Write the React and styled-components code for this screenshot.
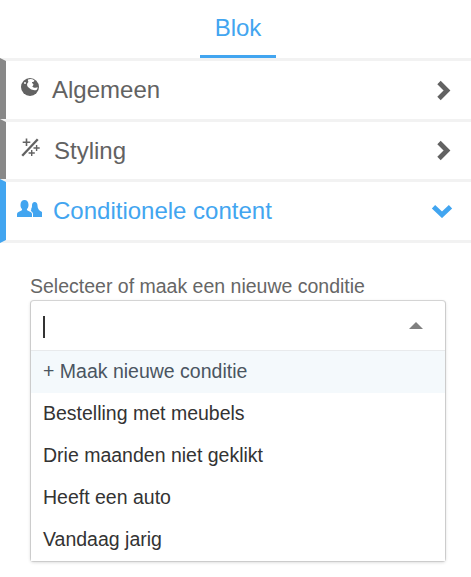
import React from "react";
import styled, { createGlobalStyle } from "styled-components";

const Global = createGlobalStyle`
  html, body { margin: 0; padding: 0; background: #fff; }
  body { font-family: "Liberation Sans", Arial, sans-serif; overflow: hidden; }
`;

const Page = styled.div`
  width: 471px;
  height: 577px;
  overflow: hidden;
`;

const TabBar = styled.div`
  display: flex;
  justify-content: center;
  height: 58px;
  padding-left: 5px;
`;

const Tab = styled.div`
  width: 76px;
  height: 55px;
  box-sizing: content-box;
  border-bottom: 3px solid #42a5f0;
  color: #42a5f0;
  font-size: 24px;
  line-height: 56px;
  text-align: center;
`;

const Accordion = styled.div`
  display: flex;
  flex-direction: column;
`;

const Row = styled.div`
  display: flex;
  align-items: center;
  box-sizing: border-box;
  height: ${(p) => p.$h}px;
  border-left: 6px solid ${(p) => (p.$active ? "#42a5f0" : "#888888")};
  border-top: 3px solid #f2f2f2;
  border-bottom: ${(p) => (p.$last ? "3px solid #f2f2f2" : "0")};
  color: ${(p) => (p.$active ? "#42a5f0" : "#626262")};
  font-size: 24px;
`;

const IconSlot = styled.span`
  display: flex;
  flex: none;
  width: ${(p) => p.$w}px;
  margin-left: ${(p) => p.$ml}px;
  transform: translateY(${(p) => p.$dy}px);
`;

const Title = styled.span`
  flex: 1;
  line-height: 28px;
`;

const ChevronSlot = styled.span`
  display: flex;
  margin-right: ${(p) => p.$mr}px;
`;

const Section = styled.div`
  padding: 30px 25px 0 30px;
`;

const Label = styled.div`
  color: #666666;
  font-size: 19.5px;
  line-height: 26px;
  margin-bottom: 1px;
`;

const Select = styled.div`
  border-radius: 4px;
  background: #fff;
  border: 1px solid #ccc;
  border-top-color: #d4d4d4;
  box-shadow: 0 1px 3px rgba(0, 0, 0, 0.12);
`;

const Control = styled.div`
  display: flex;
  align-items: center;
  height: 49px;
  padding: 0 22px 0 12px;
  border-bottom: 1px solid #e8eaec;
`;

const Caret = styled.span`
  width: 2px;
  height: 22px;
  margin-top: 2px;
  background: #333;
`;

const Arrow = styled.span`
  margin-left: auto;
  width: 0;
  height: 0;
  border-left: 7.500px solid transparent;
  border-right: 7.500px solid transparent;
  border-bottom: 7px solid #808080;
`;

const Option = styled.div`
  height: 42px;
  line-height: 40px;
  padding-left: 12px;
  font-size: 19.5px;
  color: ${(p) => (p.$focused ? "#4a5561" : "#333")};
  background: ${(p) => (p.$focused ? "#f4f9fc" : "#fff")};
`;

const Globe = () => (
  <svg width="18" height="18" viewBox="0 0 18 18">
    <circle cx="9" cy="9" r="9" fill="#626262" />
    <path d="M7 1.600c2-1 4.500-.6 6.200.6.500 1-.8 1.800-2 1.800-.7.900.3 1.300 1 2 .8 1-.4 1.800-1 2.400.8.900 2 1.300 3.200 1.300 1 0 1.700-.2 2.400-.5-.2 1.200-.7 2.100-1.300 2.800-2.100.6-4.400.2-6-.9-2.300-1.500-3.900-3.100-3.400-5 .3-1.200 1.300-1.500 1.200-2.500C7.200 3 6.700 2.600 7 1.600z" fill="#fff" />
    <circle cx="4" cy="5" r="1" fill="#fff" />
  </svg>
);

const Wand = () => (
  <svg width="19" height="19" viewBox="0 0 19 19" fill="#626262">
    <path d="M0.400 17 15.900 0.400l1.700 1.600L2.100 18.600z" />
    <path d="M4.700 0.500h1.600v3h3v1.600h-3v3H4.700v-3h-3V3.500h3zM14.900 7h1.400v2.300h2.400v1.400h-2.400V13h-1.400v-2.300h-2.400V9.300h2.400zM10 12h1.400v2.300h2.400v1.400h-2.400V18H10v-2.300H7.600v-1.400H10z" />
  </svg>
);

const Users = () => (
  <svg width="25" height="17" viewBox="0 0 25 17" fill="#42a5f0">
    <path d="M0 17v-3c0-1.800 2.500-2.500 4.500-3.500.700-.400.800-1.100.300-1.700C3.800 7.700 3.500 6.500 3.500 4.800 3.500 1.800 5.200 0 7.500 0s4 1.800 4 4.800c0 1.700-.300 2.900-1.300 4-.500.600-.400 1.300.300 1.700 2 1 4.500 1.700 4.500 3.500v3z" />
    <path d="M16 17v-3c0-1.500-1.100-2.500-2.300-3.300.7-.500.700-1.200.300-1.700.9-1 1-2.200 1-3.500 0-2.200 1-3.500 2.700-3.500s2.800 1.300 2.800 3.500c0 1.500.300 2.700 1 3.700.6.800 1 1.200 1.800 1.700 1.300.800 2.500 1.300 2.500 2.800V17z" />
  </svg>
);

const ChevronRight = () => (
  <svg width="15" height="21" viewBox="0 0 15 21">
    <path d="M3 2.500l8 8-8 8" fill="none" stroke="#626262" strokeWidth="4.800" />
  </svg>
);

const ChevronDown = () => (
  <svg width="22" height="14" viewBox="0 0 22 14">
    <path d="M2.500 2.800l8.500 8 8.500-8" fill="none" stroke="#42a5f0" strokeWidth="4.800" />
  </svg>
);

export default function App() {
  return (
    <Page>
      <Global />
      <TabBar>
        <Tab>Blok</Tab>
      </TabBar>
      <Accordion>
        <Row $h={61}>
          <IconSlot $w={31} $ml={15} $dy={-3}><Globe /></IconSlot>
          <Title>Algemeen</Title>
          <ChevronSlot $mr={20}><ChevronRight /></ChevronSlot>
        </Row>
        <Row $h={60}>
          <IconSlot $w={33} $ml={15} $dy={-3}><Wand /></IconSlot>
          <Title>Styling</Title>
          <ChevronSlot $mr={20}><ChevronRight /></ChevronSlot>
        </Row>
        <Row $h={64} $active $last>
          <IconSlot $w={36} $ml={11} $dy={-3}><Users /></IconSlot>
          <Title>Conditionele content</Title>
          <ChevronSlot $mr={18}><ChevronDown /></ChevronSlot>
        </Row>
      </Accordion>
      <Section>
        <Label>Selecteer of maak een nieuwe conditie</Label>
        <Select>
          <Control>
            <Caret />
            <Arrow />
          </Control>
          <Option $focused>+ Maak nieuwe conditie</Option>
          <Option>Bestelling met meubels</Option>
          <Option>Drie maanden niet geklikt</Option>
          <Option>Heeft een auto</Option>
          <Option>Vandaag jarig</Option>
        </Select>
      </Section>
    </Page>
  );
}
